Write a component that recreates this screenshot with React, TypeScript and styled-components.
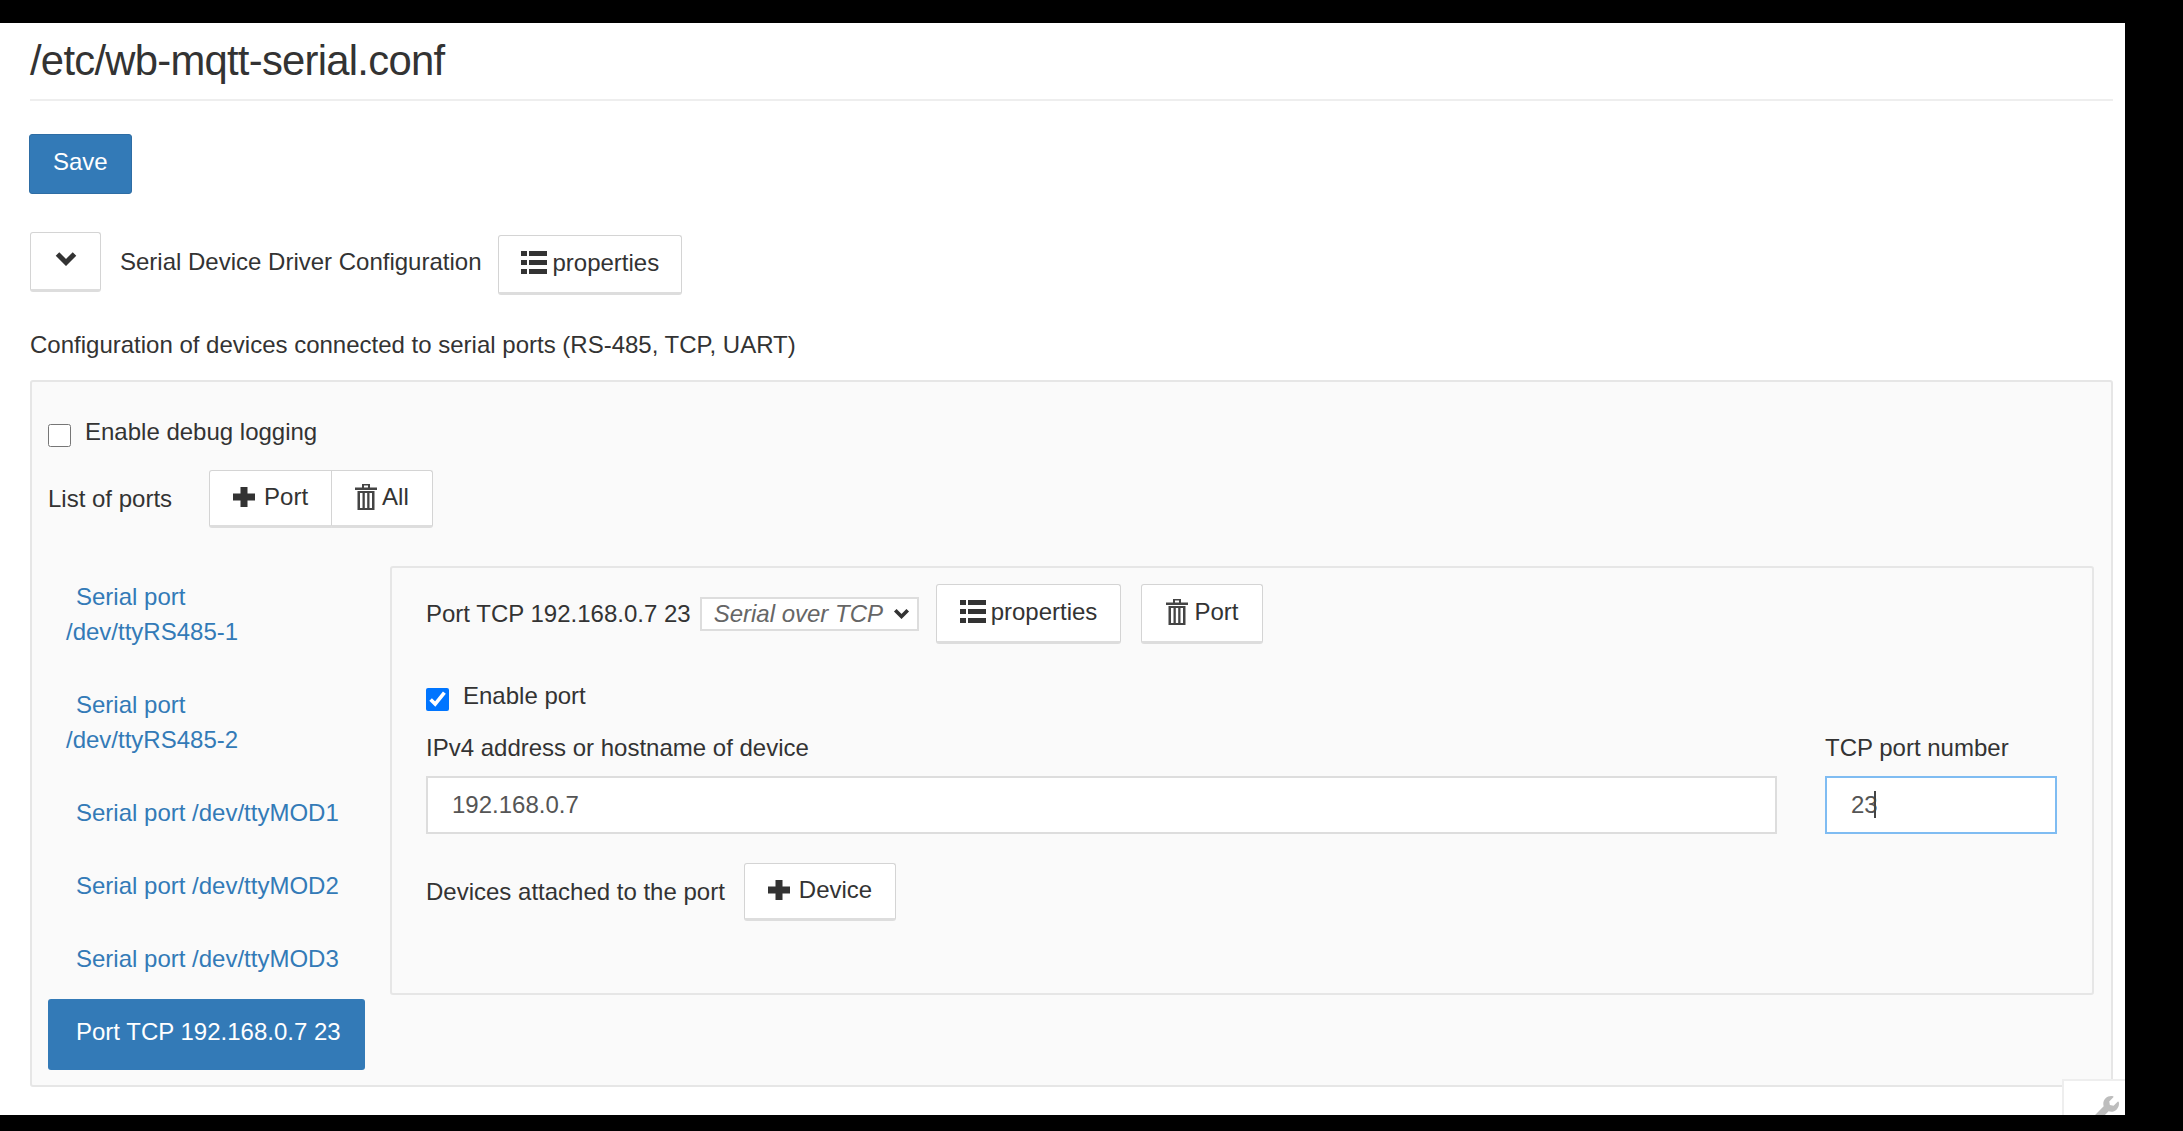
import React from 'react';
import styled, { createGlobalStyle } from 'styled-components';
import { FaWrench } from 'react-icons/fa';

const GlobalStyle = createGlobalStyle`
  html, body {
    margin: 0;
    padding: 0;
    background: #000;
  }
  body {
    font-family: "Liberation Sans", Arial, sans-serif;
    font-size: 24px;
    color: #333;
  }
`;

const Page = styled.div`
  width: 2183px;
  height: 1131px;
  box-sizing: border-box;
  padding: 23px 58px 16px 0;
  background: #000;
`;

const Sheet = styled.main`
  position: relative;
  height: 100%;
  box-sizing: border-box;
  padding: 0 12px 0 30px;
  background: #fff;
  overflow: hidden;
`;

const Title = styled.h1`
  margin: 0;
  height: 76px;
  line-height: 76px;
  font-size: 41.8px;
  font-weight: 400;
  letter-spacing: -0.74px;
  border-bottom: 2px solid #eee;
`;

const Button = styled.button<{ $h?: number }>`
  display: inline-flex;
  align-items: center;
  justify-content: center;
  height: ${(p) => p.$h ?? 60}px;
  box-sizing: border-box;
  padding: 0 23px 3px;
  font: inherit;
  color: #333;
  background: #fff;
  border: 1px solid #d4d4d4;
  border-bottom: 3px solid #ddd;
  border-radius: 3px;
`;

const SaveButton = styled(Button)`
  display: flex;
  margin: 33px 0 0 -1px;
  padding: 0 23px 5px;
  color: #fff;
  background: #337ab7;
  border: 1px solid #2e6da4;
`;

const DriverRow = styled.div`
  display: flex;
  align-items: flex-start;
  margin-top: 38px;
`;

const ChevronButton = styled(Button)`
  width: 71px;
  padding: 0 0 6px;
`;

const DriverTitle = styled.span`
  margin: 16px 17px 0 19px;
  line-height: 28px;
`;

const PropertiesButton = styled(Button)`
  margin-top: 3px;
  padding: 0 22px 3px;
`;

const Description = styled.p`
  margin: 36px 0 0;
  line-height: 28px;
`;

const Well = styled.section`
  box-sizing: border-box;
  height: 707px;
  margin-top: 21px;
  padding: 0 17px 0 16px;
  background: #fafafa;
  border: 2px solid #e6e6e6;
  border-radius: 3px;
`;

const CheckRow = styled.label<{ $top: number }>`
  display: flex;
  align-items: flex-start;
  gap: 14px;
  margin-top: ${(p) => p.$top}px;
  line-height: 28px;
`;

const Check = styled.input`
  width: 23px;
  height: 23px;
  margin: 6px 0 0;
  flex: none;
`;

const ListRow = styled.div`
  display: flex;
  align-items: center;
  gap: 37px;
  margin-top: 23px;
`;

const ButtonGroup = styled.div`
  display: flex;
`;

const GroupButton = styled(Button)<{ $last?: boolean }>`
  border-radius: ${(p) => (p.$last ? '0 3px 3px 0' : '3px 0 0 3px')};
  border-left-width: ${(p) => (p.$last ? 0 : 1)}px;
  height: 58px;
`;

const Split = styled.div`
  display: flex;
  align-items: flex-start;
  gap: 25px;
  margin-top: 38px;
`;

const Tabs = styled.nav`
  flex: none;
  width: 317px;
  margin-top: -2px;
  display: flex;
  flex-direction: column;
  gap: 2px;
`;

const Tab = styled.a<{ $active?: boolean }>`
  display: block;
  box-sizing: border-box;
  padding: 15px 20px 21px 18px;
  text-indent: 10px;
  line-height: 35px;
  border-radius: 3px;
  color: ${(p) => (p.$active ? '#fff' : '#337ab7')};
  background: ${(p) => (p.$active ? '#337ab7' : 'transparent')};
`;

const PortPanel = styled.div`
  flex: 1;
  box-sizing: border-box;
  height: 429px;
  padding: 16px 35px 0 34px;
  border: 2px solid #e6e6e6;
  border-radius: 3px;
`;

const PortHeader = styled.div`
  display: flex;
  align-items: center;
`;

const PortName = styled.span`
  margin-right: 9px;
  padding-bottom: 1px;
`;

const SelectWrap = styled.div`
  position: relative;
  display: inline-flex;
  margin-right: 17px;
`;

const TypeSelect = styled.select`
  width: 219px;
  height: 34px;
  box-sizing: border-box;
  padding: 0 0 2px 12px;
  appearance: none;
  font: italic 24px "Liberation Sans", Arial, sans-serif;
  color: #666;
  background: #fff;
  border: 2px solid #ddd;
  border-radius: 0;
`;

const SelectArrow = styled.span`
  position: absolute;
  right: 9px;
  top: 11px;
  display: flex;
  pointer-events: none;
`;

const DeletePortButton = styled(Button)`
  margin-left: 20px;
  padding: 0 24px 3px;
`;

const FieldRow = styled.div`
  display: flex;
  gap: 48px;
  margin-top: 23px;
`;

const Field = styled.div<{ $w?: number }>`
  position: relative;
  flex: ${(p) => (p.$w ? `none` : 1)};
  width: ${(p) => (p.$w ? `${p.$w}px` : 'auto')};
`;

const FieldLabel = styled.label`
  display: block;
  line-height: 28px;
  margin-bottom: 14px;
`;

const TextInput = styled.input<{ $focused?: boolean }>`
  display: block;
  width: 100%;
  height: 58px;
  box-sizing: border-box;
  padding: 0 24px;
  font: inherit;
  color: #555;
  background: #fff;
  border: 2px solid ${(p) => (p.$focused ? '#7fbcf2' : '#ddd')};
  outline: none;
`;

const Caret = styled.span`
  position: absolute;
  left: 49px;
  bottom: 16px;
  width: 2px;
  height: 27px;
  background: #444;
`;

const DevicesRow = styled.div`
  display: flex;
  align-items: center;
  gap: 19px;
  margin-top: 29px;
`;

const ToolCorner = styled.div`
  position: absolute;
  right: 0;
  bottom: 0;
  width: 63px;
  height: 36px;
  box-sizing: border-box;
  padding: 15px 0 0 27px;
  color: #bdbdbd;
  background: #fff;
  border-top: 2px solid #eee;
  border-left: 2px solid #eee;
`;

const IconGap = styled.span<{ $gap: number }>`
  display: inline-flex;
  margin-right: ${(p) => p.$gap}px;
`;

const ChevronDown = ({ w = 22, h = 15 }: { w?: number; h?: number }) => (
  <svg width={w} height={h} viewBox="0 0 22 15" fill="none">
    <path d="M2.5 3 L11 11.5 L19.5 3" stroke="currentColor" strokeWidth="5" />
  </svg>
);

const ThList = () => (
  <svg width="26" height="23" viewBox="0 0 26 23" fill="#333">
    <rect x="0" y="0" width="6" height="5" />
    <rect x="0" y="9" width="6" height="5" />
    <rect x="0" y="18" width="6" height="5" />
    <rect x="8" y="0" width="18" height="5" />
    <rect x="8" y="9" width="18" height="5" />
    <rect x="8" y="18" width="18" height="5" />
  </svg>
);

const Plus = () => (
  <svg width="22" height="22" viewBox="0 0 22 22" fill="#333">
    <path d="M7.5 1 h7 v6.5 H22 v7 h-7.5 V21 h-7 v-6.5 H0 v-7 h7.5z" />
  </svg>
);

const Trash = () => (
  <svg width="22" height="26" viewBox="0 0 22 26" fill="#444">
    <path d="M7 0 h8 v3.5 h7 v2.5 H0 V3.500 h7z M9 1.500 v2 h4 v-2z" fillRule="evenodd" />
    <path
      d="M2.500 7 h17 v19 h-17z M5 9 v15 h2.500 V9z M9.800 9 v15 h2.400 V9z M14.500 9 v15 H17 V9z"
      fillRule="evenodd"
    />
  </svg>
);

const ports = [
  'Serial port /dev/ttyRS485-1',
  'Serial port /dev/ttyRS485-2',
  'Serial port /dev/ttyMOD1',
  'Serial port /dev/ttyMOD2',
  'Serial port /dev/ttyMOD3',
  'Port TCP 192.168.0.7 23',
];

const App = () => {
  return (
    <>
      <GlobalStyle />
      <Page>
        <Sheet>
          <Title>/etc/wb-mqtt-serial.conf</Title>
          <SaveButton>Save</SaveButton>

          <DriverRow>
            <ChevronButton>
              <ChevronDown />
            </ChevronButton>
            <DriverTitle>Serial Device Driver Configuration</DriverTitle>
            <PropertiesButton>
              <IconGap $gap={5}>
                <ThList />
              </IconGap>
              properties
            </PropertiesButton>
          </DriverRow>

          <Description>Configuration of devices connected to serial ports (RS-485, TCP, UART)</Description>

          <Well>
            <CheckRow $top={36}>
              <Check type="checkbox" />
              Enable debug logging
            </CheckRow>

            <ListRow>
              <span>List of ports</span>
              <ButtonGroup>
                <GroupButton>
                  <IconGap $gap={9}>
                    <Plus />
                  </IconGap>
                  Port
                </GroupButton>
                <GroupButton $last>
                  <IconGap $gap={5}>
                    <Trash />
                  </IconGap>
                  All
                </GroupButton>
              </ButtonGroup>
            </ListRow>

            <Split>
              <Tabs>
                {ports.map((port, i) => (
                  <Tab key={port} $active={i === ports.length - 1}>
                    {port}
                  </Tab>
                ))}
              </Tabs>

              <PortPanel>
                <PortHeader>
                  <PortName>Port TCP 192.168.0.7 23</PortName>
                  <SelectWrap>
                    <TypeSelect defaultValue="tcp">
                      <option value="tcp">Serial over TCP</option>
                    </TypeSelect>
                    <SelectArrow>
                      <ChevronDown w={17} h={11} />
                    </SelectArrow>
                  </SelectWrap>
                  <Button>
                    <IconGap $gap={5}>
                      <ThList />
                    </IconGap>
                    properties
                  </Button>
                  <DeletePortButton>
                    <IconGap $gap={6}>
                      <Trash />
                    </IconGap>
                    Port
                  </DeletePortButton>
                </PortHeader>

                <CheckRow $top={38}>
                  <Check type="checkbox" defaultChecked />
                  Enable port
                </CheckRow>

                <FieldRow>
                  <Field>
                    <FieldLabel>IPv4 address or hostname of device</FieldLabel>
                    <TextInput defaultValue="192.168.0.7" />
                  </Field>
                  <Field $w={232}>
                    <FieldLabel>TCP port number</FieldLabel>
                    <TextInput $focused defaultValue="23" />
                    <Caret />
                  </Field>
                </FieldRow>

                <DevicesRow>
                  <span>Devices attached to the port</span>
                  <Button $h={58}>
                    <IconGap $gap={9}>
                      <Plus />
                    </IconGap>
                    Device
                  </Button>
                </DevicesRow>
              </PortPanel>
            </Split>
          </Well>

          <ToolCorner>
            <FaWrench size={28} />
          </ToolCorner>
        </Sheet>
      </Page>
    </>
  );
};

export default App;
